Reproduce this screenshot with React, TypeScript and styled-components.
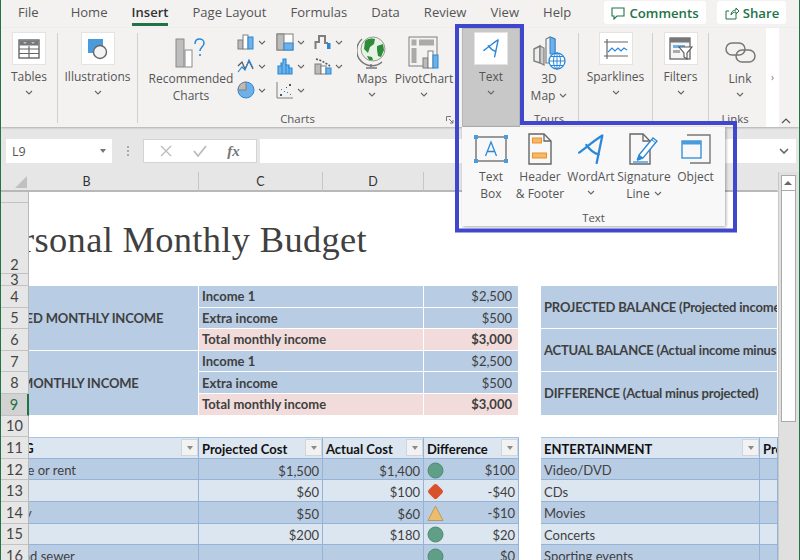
import React from 'react'
import styled, { createGlobalStyle } from 'styled-components'

const GlobalStyle = createGlobalStyle`
  html, body {
    margin: 0;
    padding: 0;
    background: #fff;
  }
  * {
    box-sizing: border-box;
  }
`

const UI_FONT = `"Open Sans", "Noto Sans", sans-serif`
const SHEET_FONT = `Lato, "Liberation Sans", sans-serif`

const Window = styled.div`
  position: relative;
  width: 800px;
  height: 560px;
  overflow: hidden;
  display: flex;
  flex-direction: column;
  background: #f3f2f1;
  border-left: 1px solid #217346;
  border-right: 1px solid #217346;
  font-family: ${UI_FONT};
  color: #444;
`

/* ---------- menu bar ---------- */

const MenuBar = styled.div`
  height: 28px;
  display: flex;
  align-items: flex-start;
  padding-left: 5px;
  flex: none;
`

const Tab = styled.div<{ $active?: boolean; $gap?: number }>`
  position: relative;
  height: 28px;
  padding: 3px 12px 0;
  margin-right: ${({ $gap }) => $gap || 0}px;
  font-size: 13.05px;
  line-height: 18px;
  font-weight: ${({ $active }) => ($active ? 600 : 400)};
  color: ${({ $active }) => ($active ? '#333' : '#555')};

  &::after {
    content: '';
    display: ${({ $active }) => ($active ? 'block' : 'none')};
    position: absolute;
    left: 12px;
    right: 12px;
    top: 23px;
    height: 3px;
    background: #217346;
  }
`

const MenuActions = styled.div`
  margin-left: auto;
  margin-right: 13px;
  margin-top: 1px;
  display: flex;
  gap: 11px;
`

const ActionButton = styled.div<{ $width: number }>`
  width: ${({ $width }) => $width}px;
  height: 23px;
  display: flex;
  align-items: center;
  justify-content: center;
  gap: 4px;
  background: #fff;
  border-radius: 3px;
  color: #217346;
  font-size: 13.2px;
  font-weight: 600;
`

/* ---------- ribbon ---------- */

const Ribbon = styled.div`
  position: relative;
  height: 99px;
  flex: none;
  display: flex;
  box-shadow: 0 1px 2px rgba(0, 0, 0, 0.25);
  z-index: 1;
`

const Group = styled.div<{ $width: number; $plain?: boolean }>`
  position: relative;
  width: ${({ $width }) => $width}px;
  flex: none;
  display: flex;
  flex-direction: column;

  &::after {
    content: '';
    display: ${({ $plain }) => ($plain ? 'none' : 'block')};
    position: absolute;
    right: 0;
    top: 5px;
    bottom: 4px;
    width: 1px;
    background: #d2d0ce;
  }
`

const GroupRow = styled.div<{ $pad?: number }>`
  flex: 1;
  display: flex;
  padding-left: ${({ $pad }) => $pad || 0}px;
  min-height: 0;
`

const GroupColumn = styled.div`
  display: flex;
  flex-direction: column;
  min-height: 0;
`

const GroupLabel = styled.div`
  height: 15px;
  flex: none;
  line-height: 14px;
  text-align: center;
  font-size: 11.4px;
  color: #555;
`

const BigButton = styled.div<{ $width: number; $active?: boolean; $tile?: boolean; $grow?: boolean }>`
  width: ${({ $width }) => $width}px;
  flex: ${({ $grow }) => ($grow ? '1' : 'none')};
  display: flex;
  flex-direction: column;
  align-items: center;
  padding-top: ${({ $tile }) => ($tile ? 4 : 7)}px;
  background: ${({ $active }) => ($active ? '#c8c8c8' : 'transparent')};
  box-shadow: ${({ $active }) => ($active ? 'inset 0 0 0 1px #b5b5b5' : 'none')};
`

const Tile = styled.div`
  width: 34px;
  height: 33px;
  margin-bottom: 3px;
  flex: none;
  background: #fff;
  border: 1px solid #e3e3e3;
  display: flex;
  align-items: center;
  justify-content: center;
`

const IconSlot = styled.div`
  height: 35px;
  flex: none;
  display: flex;
  align-items: center;
  justify-content: center;
`

const Label = styled.div`
  font-size: 12px;
  line-height: 17px;
  text-align: center;
  white-space: nowrap;
  color: #555;
`

const ChevronRow = styled.div`
  height: 15px;
  display: flex;
  align-items: center;
  justify-content: center;
`

const SmallCharts = styled.div`
  display: grid;
  grid-auto-flow: column;
  grid-template-rows: repeat(3, 24px);
  grid-template-columns: 38.5px 38.5px 34px;
  padding-top: 2px;
`

const SmallChart = styled.div`
  display: flex;
  align-items: center;
  gap: 3px;
`

const ScrollTab = styled.div`
  width: 13px;
  margin-left: 5px;
  background: #fff;
  display: flex;
  align-items: center;
  justify-content: center;
  color: #777;
  font-size: 10px;
  padding-bottom: 2px;
`

const Launcher = styled.svg`
  position: absolute;
  right: 3px;
  bottom: 3px;
`

const Collapse = styled.svg`
  position: absolute;
  right: 8px;
  bottom: 3px;
`

/* ---------- formula bar ---------- */

const FormulaBar = styled.div`
  height: 45px;
  flex: none;
  background: #e6e6e6;
  display: flex;
  padding: 12px 3px 9px 5px;
`

const NameBox = styled.div`
  width: 106px;
  background: #fff;
  display: flex;
  align-items: center;
  justify-content: space-between;
  padding: 0 6px;
  font-size: 12.5px;
  color: #555;
`

const DownTriangle = styled.span<{ $color?: string }>`
  width: 0;
  height: 0;
  border-left: 3.5px solid transparent;
  border-right: 3.5px solid transparent;
  border-top: 4px solid ${({ $color }) => $color || '#777'};
`

const Dots = styled.div`
  width: 31px;
  display: flex;
  flex-direction: column;
  align-items: center;
  justify-content: center;
  gap: 2px;

  span {
    width: 2px;
    height: 2px;
    background: #aaa;
  }
`

const FxGroup = styled.div`
  width: 114px;
  background: #fff;
  border: 1px solid #d4d4d4;
  display: flex;
  align-items: center;
  justify-content: space-around;
  padding: 0 6px;
  margin-right: 3px;
`

const FxLabel = styled.span`
  font-family: "Liberation Serif", serif;
  font-style: italic;
  font-weight: 700;
  font-size: 15px;
  color: #777;
`

const FormulaInput = styled.div`
  flex: 1;
  background: #fff;
  display: flex;
  align-items: center;
  justify-content: flex-end;
  padding-right: 7px;
`

/* ---------- sheet ---------- */

const SheetArea = styled.div`
  flex: 1;
  display: flex;
  min-height: 0;
  background: #fff;
`

const SheetGrid = styled.div`
  width: 777px;
  flex: none;
  display: grid;
  grid-template-columns: 28px 170px 124px 101px 95px 22px 219px 18px;
  grid-template-rows: 20px 11px 71px 12px repeat(13, 21.6px);
  overflow: hidden;
  font-family: ${SHEET_FONT};
  font-size: 13px;
  color: #404040;
`

const ColHead = styled.div<{ $col: number; $span?: number; $offset?: number; $open?: boolean }>`
  grid-column: ${({ $col, $span }) => `${$col} / span ${$span || 1}`};
  grid-row: 1;
  background: #e6e6e6;
  border-bottom: 2px solid #b8b8b8;
  border-right: 1px solid ${({ $open }) => ($open ? 'transparent' : '#c6c6c6')};
  display: flex;
  align-items: center;
  justify-content: center;
  padding-right: ${({ $offset }) => $offset || 0}px;
  font-size: 12.5px;
  color: #333;
`

const Corner = styled.div`
  grid-column: 1;
  grid-row: 1;
  background: #e6e6e6;
  border-bottom: 2px solid #b8b8b8;
  display: flex;
  align-items: flex-end;
  justify-content: flex-end;
  padding: 0 2px 2px 0;

  span {
    width: 0;
    height: 0;
    border-left: 12px solid transparent;
    border-bottom: 12px solid #c0c0c0;
  }
`

const RowHead = styled.div<{ $row: number; $active?: boolean; $bottom?: boolean }>`
  grid-column: 1;
  grid-row: ${({ $row }) => $row};
  background: ${({ $active }) => ($active ? '#d2d2d2' : '#e6e6e6')};
  border-bottom: 1px solid #c2c2c2;
  border-right: ${({ $active }) => ($active ? '2px solid #217346' : '1px solid #b8b8b8')};
  display: flex;
  align-items: ${({ $bottom }) => ($bottom ? 'flex-end' : 'center')};
  justify-content: center;
  overflow: hidden;
  font-size: 14.5px;
  line-height: 17px;
  color: ${({ $active }) => ($active ? '#217346' : '#444')};
`

type Tone = 'blue' | 'light' | 'pink' | 'white'

const toneColor: Record<Tone, string> = {
  blue: '#b8cce4',
  light: '#dce6f1',
  pink: '#f2dcdb',
  white: '#fff',
}

const Cell = styled.div<{
  $col: number
  $row: number
  $colSpan?: number
  $rowSpan?: number
  $tone?: Tone
  $bold?: boolean
  $right?: boolean
  $tight?: number
}>`
  grid-column: ${({ $col, $colSpan }) => `${$col} / span ${$colSpan || 1}`};
  grid-row: ${({ $row, $rowSpan }) => `${$row} / span ${$rowSpan || 1}`};
  background: ${({ $tone }) => toneColor[$tone || 'white']};
  font-weight: ${({ $bold }) => ($bold ? 700 : 400)};
  letter-spacing: ${({ $tight }) => ($tight ? -$tight : 0)}px;
  display: flex;
  align-items: center;
  justify-content: ${({ $right }) => ($right ? 'flex-end' : 'flex-start')};
  padding: ${({ $right }) => ($right ? '0 6px 0 0' : '0 0 0 3px')};
  white-space: nowrap;
  overflow: hidden;
  border-right: 1px solid #fff;
  border-bottom: 1.5px solid #fff;
`

const ClippedText = styled.span<{ $shift: number }>`
  margin-left: ${({ $shift }) => -$shift}px;
  flex: none;
`

const TitleCell = styled.div`
  grid-column: 2 / span 3;
  grid-row: 3;
  overflow: hidden;
  white-space: nowrap;
  display: flex;
  align-items: flex-end;
  padding-bottom: 14px;
  font-family: "Liberation Serif", serif;
  font-size: 36.4px;
  line-height: 40px;
  letter-spacing: 0.35px;
  color: #404040;
`

const TableCell = styled.div<{
  $col: number
  $row: number
  $shade: 'blue' | 'light'
  $head?: boolean
  $right?: boolean
}>`
  grid-column: ${({ $col }) => $col};
  grid-row: ${({ $row }) => $row};
  background: ${({ $shade }) => toneColor[$shade]};
  border-right: 1px solid #95b3d7;
  border-bottom: 1px solid #95b3d7;
  border-top: ${({ $head }) => ($head ? '1px solid #a9c2e0' : '0')};
  color: ${({ $head }) => ($head ? '#111' : '#404040')};
  font-weight: ${({ $head }) => ($head ? 700 : 400)};
  display: flex;
  align-items: center;
  justify-content: ${({ $right }) => ($right ? 'flex-end' : 'space-between')};
  gap: 2px;
  padding: ${({ $head, $right }) => ($head ? '0 0 0 3px' : $right ? '3px 3px 0 0' : '2px 3px 0 3px')};
  white-space: nowrap;
  overflow: hidden;
`

const HeadText = styled.span`
  padding-top: 2px;
`

const FilterButton = styled.div`
  width: 17px;
  height: 17px;
  flex: none;
  background: #f2f2f2;
  border: 1px solid #cfd6df;
  display: flex;
  align-items: center;
  justify-content: center;
`

const Scrollbar = styled.div`
  flex: 1;
  background: #e0e0e0;
  border-left: 1px solid #c8c8c8;
  display: flex;
  flex-direction: column;
  align-items: center;
  padding: 3px 2px 0 0;
`

const ScrollArrow = styled.div`
  width: 15px;
  height: 16px;
  background: #fff;
  border: 1px solid #aaa;
  display: flex;
  align-items: center;
  justify-content: center;

  span {
    width: 0;
    height: 0;
    border-left: 4px solid transparent;
    border-right: 4px solid transparent;
    border-bottom: 4px solid #666;
  }
`

const ScrollThumb = styled.div`
  width: 15px;
  height: 231px;
  background: #fff;
  border: 1px solid #aaa;
  border-top: 0;
`

/* ---------- dropdown and annotation ---------- */

const Dropdown = styled.div`
  position: absolute;
  left: 461px;
  top: 127px;
  width: 263px;
  height: 99px;
  z-index: 2;
  background: #f8f8f8;
  box-shadow: 1px 1px 3px rgba(0, 0, 0, 0.35);
  display: flex;
  flex-direction: column;
`

const DropRow = styled.div`
  flex: 1;
  display: flex;
  padding-left: 5px;
`

const DropButton = styled.div<{ $width: number }>`
  width: ${({ $width }) => $width}px;
  flex: none;
  display: flex;
  flex-direction: column;
  align-items: center;
  padding-top: 5px;
`

const DropIcon = styled.div`
  height: 34px;
  margin-bottom: 2px;
  display: flex;
  align-items: center;
  justify-content: center;
`

const InlineChevron = styled.span`
  display: inline-flex;
  margin-left: 4px;
  vertical-align: 2px;
`

const Annotation = styled.svg`
  position: absolute;
  left: -1px;
  top: 0;
  z-index: 3;
  pointer-events: none;
`

const StatusSvg = styled.svg`
  flex: none;
`

/* ---------- drawings ---------- */

const Chevron = () => (
  <svg width="8" height="5" viewBox="0 0 8 5">
    <path d="M1 1l3 3 3-3" fill="none" stroke="#666" strokeWidth="1.1" />
  </svg>
)

const Grey = '#7f7f7f'
const Blue = '#2b88d8'
const LightBlue = '#9ccbee'

const TableIcon = () => (
  <svg width="22" height="22" viewBox="0 0 22 22">
    <rect x="1" y="2" width="20" height="18" fill="#fff" stroke="#666" strokeWidth="1.4" />
    <rect x="1.5" y="2.5" width="19" height="5" fill="#777" />
    <path d="M5 4l2 2 2-2zM13 4l2 2 2-2z" fill={LightBlue} />
    <path d="M1 11h20M1 15.5h20M11 8v12" stroke="#666" strokeWidth="1.2" />
  </svg>
)

const ShapesIcon = () => (
  <svg width="24" height="24" viewBox="0 0 24 24">
    <rect x="2" y="2" width="15" height="14" fill="#4a9bdc" />
    <circle cx="14" cy="15" r="6.5" fill="#f4f4f4" stroke="#666" strokeWidth="1.4" />
  </svg>
)

const RecommendedIcon = () => (
  <svg width="32" height="32" viewBox="0 0 32 32">
    <rect x="1" y="2" width="8" height="28" fill="#bdbdbd" stroke="#8a8a8a" />
    <rect x="10" y="13" width="7" height="17" fill="#fff" stroke="#8a8a8a" />
    <path d="M20 7c0-7 9-6 9-1 0 4-4 4-4 8" fill="none" stroke={Blue} strokeWidth="1.5" />
    <circle cx="25" cy="18" r="1.1" fill={Blue} />
  </svg>
)

const ColumnMini = () => (
  <svg width="18" height="18" viewBox="0 0 18 18">
    <rect x="1" y="7" width="5" height="9" fill="#bbb" stroke={Grey} />
    <rect x="6" y="2" width="5" height="14" fill="#fff" stroke={Grey} />
    <rect x="11" y="4" width="5" height="12" fill="#6fb1e6" stroke={Blue} />
  </svg>
)

const LineMini = () => (
  <svg width="18" height="18" viewBox="0 0 18 18">
    <path d="M1 9l4-4 3 7 4-8 4 8" fill="none" stroke="#555" strokeWidth="1.2" />
    <path d="M1 15l4-5 3 3 4-10 4 8" fill="none" stroke={Blue} strokeWidth="1.2" />
  </svg>
)

const PieMini = () => (
  <svg width="18" height="18" viewBox="0 0 18 18">
    <circle cx="9" cy="9" r="8" fill="#6fb1e6" stroke={Blue} />
    <path d="M9 9V1a8 8 0 0 0-8 8z" fill="#bbb" stroke={Grey} />
  </svg>
)

const HierarchyMini = () => (
  <svg width="18" height="18" viewBox="0 0 18 18">
    <rect x="1" y="1" width="16" height="16" fill="#fff" stroke={Grey} />
    <rect x="1" y="1" width="7" height="16" fill="#bbb" stroke={Grey} />
    <rect x="8" y="10" width="9" height="7" fill="#6fb1e6" stroke={Blue} />
  </svg>
)

const StatMini = () => (
  <svg width="18" height="18" viewBox="0 0 18 18">
    <path
      d="M2 17V9h3V6h2V2h3v6h3v3h3v6z"
      fill="#6fb1e6"
      stroke={Blue}
      strokeWidth="1.1"
    />
    <path d="M6 17V7M10 17V7M13 17v-8" stroke={Blue} />
  </svg>
)

const ScatterMini = () => (
  <svg width="18" height="18" viewBox="0 0 18 18">
    <path d="M1 1v16h16" fill="none" stroke={Grey} />
    <path d="M5 8h1v1H5zM8 10h1v1H8zM11 11h1v1h-1zM14 13h1v1h-1z" fill={Blue} />
    <path d="M4 13h2v2H4zM13 3h2v2h-2zM10 6h1v1h-1z" fill="#555" />
  </svg>
)

const WaterfallMini = () => (
  <svg width="18" height="18" viewBox="0 0 18 18">
    <path d="M1.5 16V9H5V3h6v7h3" fill="none" stroke={Grey} strokeWidth="2" />
    <rect x="13" y="10" width="3.5" height="6" fill={Blue} />
  </svg>
)

const BoxMini = () => (
  <svg width="18" height="18" viewBox="0 0 18 18">
    <path d="M2 2l6 2 5 3 3 2" fill="none" stroke="#555" strokeWidth="1.6" strokeDasharray="2 1.5" />
    <rect x="1" y="7" width="6" height="10" fill="#bbb" stroke={Grey} />
    <rect x="7" y="9" width="5" height="8" fill="#fff" stroke={Grey} />
    <rect x="12" y="11" width="5" height="6" fill="#6fb1e6" stroke={Blue} />
  </svg>
)

const GlobeIcon = () => (
  <svg width="30" height="35" viewBox="0 0 30 35">
    <circle cx="16" cy="14" r="12" fill="#e8f2e4" stroke="#999" />
    <path d="M8 6c3-3 8-3 10-2l-1 5-4 3-2 6-4-4zM20 11l6-2 1 6-3 7-3-1-1-6zM10 21l5 1 1 3-4 0z" fill="#2e8b3a" />
    <path d="M5 4A15 15 0 0 0 25 27" fill="none" stroke="#777" strokeWidth="1.5" />
    <path d="M14 29v3M9 33h11" stroke="#777" strokeWidth="1.6" />
  </svg>
)

const PivotIcon = () => (
  <svg width="32" height="33" viewBox="0 0 32 33">
    <rect x="1" y="1" width="28" height="29" fill="#f3f2f1" stroke={Grey} />
    <rect x="3.5" y="3.5" width="5" height="6" fill="#aaa" />
    <rect x="11" y="3.5" width="15" height="6" fill="#aaa" />
    <rect x="3.5" y="12" width="5" height="15" fill="#aaa" />
    <rect x="15" y="22" width="5" height="10" fill="#bbb" stroke={Grey} />
    <rect x="20" y="15" width="5" height="17" fill="#fff" stroke={Grey} />
    <rect x="25" y="19" width="5" height="13" fill="#6fb1e6" stroke={Blue} />
  </svg>
)

const WordArtIcon = ({ width, height }: { width: number; height: number }) => (
  <svg width={width} height={height} viewBox="0 0 26 30">
    <path
      d="M1 18C8 13 16 6 23.5 1.5L18 28M8 10.5C11 15 14 18 20 20"
      fill="none"
      stroke={Blue}
      strokeWidth="2.2"
      strokeLinecap="round"
      strokeLinejoin="round"
    />
  </svg>
)

const MapIcon = () => (
  <svg width="34" height="34" viewBox="0 0 34 34">
    <path d="M2 13l6-3v17l-6-2z" fill="#eee" stroke={Grey} strokeWidth="1.4" />
    <path d="M8 10l4 2v17l-4-2z" fill="#ccc" stroke={Grey} strokeWidth="1.2" />
    <path d="M14 3l4-2 5 2v24l-9 0z" fill="#f3f2f1" stroke={Grey} strokeWidth="1.2" />
    <path d="M18 1l5 2v15h-5z" fill="#6fb1e6" stroke={Blue} />
    <circle cx="25" cy="25" r="8" fill="#fff" stroke={Blue} strokeWidth="1.3" />
    <path d="M17 25h16M25 17v16M19 20.5h12M19 29.5h12" stroke={Blue} />
    <ellipse cx="25" cy="25" rx="3.5" ry="8" fill="none" stroke={Blue} />
  </svg>
)

const SparkIcon = () => (
  <svg width="24" height="20" viewBox="0 0 24 20">
    <path d="M3 0v20M0 3h24M0 17h24" stroke="#666" strokeWidth="1.2" />
    <path d="M4 13l4-4 3 3 3-3 3 3 3-3 3 2" fill="none" stroke={Blue} strokeWidth="1.2" />
  </svg>
)

const FilterIcon = () => (
  <svg width="24" height="24" viewBox="0 0 24 24">
    <rect x="1" y="1" width="20" height="21" fill="#f5f5f5" stroke="#666" strokeWidth="1.3" />
    <rect x="1" y="1" width="20" height="4.5" fill="#777" />
    <rect x="4" y="8" width="12" height="3" fill="#6fb1e6" />
    <rect x="4" y="13" width="7" height="3" fill="#aaa" />
    <path d="M10 10h13l-5 6v6l-3-2v-4z" fill="#fff" stroke="#555" strokeWidth="1.1" />
  </svg>
)

const LinkIcon = () => (
  <svg width="31" height="22" viewBox="0 0 31 22">
    <rect x="1" y="1" width="19" height="12" rx="6" fill="none" stroke="#777" strokeWidth="1.5" />
    <rect x="11" y="8" width="19" height="12" rx="6" fill="none" stroke="#777" strokeWidth="1.5" />
  </svg>
)

const TextBoxIcon = () => (
  <svg width="34" height="30" viewBox="0 0 34 30">
    <rect x="2" y="3" width="30" height="24" fill="#f8f8f8" stroke="#666" strokeWidth="1.3" />
    <path d="M11.5 22L17 8l5.5 14M13.5 17.5h7" fill="none" stroke={Blue} strokeWidth="1.3" />
    <path d="M0 1h4v4H0zM30 1h4v4h-4zM0 25h4v4H0zM30 25h4v4h-4z" fill="#4a9bdc" />
  </svg>
)

const HeaderFooterIcon = () => (
  <svg width="24" height="32" viewBox="0 0 24 32">
    <path d="M1 1h15l7 7v23H1z" fill="#f8f8f8" stroke="#666" strokeWidth="1.4" />
    <path d="M16 1v7h7" fill="none" stroke="#666" strokeWidth="1.3" />
    <rect x="4.5" y="5" width="9" height="5" fill="#f5b866" stroke="#e8912c" />
    <rect x="4.5" y="20" width="14" height="5" fill="#f5b866" stroke="#e8912c" />
  </svg>
)

const SignatureIcon = () => (
  <svg width="30" height="32" viewBox="0 0 30 32">
    <path d="M1 1h13l7 7v23H1z" fill="#f8f8f8" stroke="#666" strokeWidth="1.4" />
    <path d="M14 1v7h7" fill="none" stroke="#666" strokeWidth="1.3" />
    <path d="M10 22L24 5l4 3-14 17-5 2z" fill="#fff" stroke={Blue} strokeWidth="1.3" />
    <path d="M8 27l2-5 4 3zM23 7l4 3" fill={Blue} stroke={Blue} />
    <path d="M4 29h15" stroke={Blue} strokeWidth="1.2" />
  </svg>
)

const ObjectIcon = () => (
  <svg width="30" height="30" viewBox="0 0 30 30">
    <path d="M6 1h23v28H9" fill="#f8f8f8" stroke="#777" strokeWidth="1.4" />
    <rect x="1" y="7" width="19" height="17" fill="#f8f8f8" stroke={Blue} strokeWidth="1.3" />
    <rect x="1" y="7" width="19" height="3.5" fill="#4a9bdc" />
  </svg>
)

const StatusCircle = () => (
  <StatusSvg width="17" height="17" viewBox="0 0 17 17">
    <circle cx="8.5" cy="8.5" r="7.5" fill="#5f9e87" stroke="#4f8a74" />
  </StatusSvg>
)

const StatusDiamond = () => (
  <StatusSvg width="17" height="17" viewBox="0 0 17 17">
    <rect x="2.5" y="2.5" width="12" height="12" rx="2.5" transform="rotate(45 8.5 8.5)" fill="#d9512c" />
  </StatusSvg>
)

const StatusTriangle = () => (
  <StatusSvg width="17" height="17" viewBox="0 0 17 17">
    <path d="M8.5 1L16 15.5H1z" fill="#eebc6f" stroke="#b79a63" strokeLinejoin="round" />
  </StatusSvg>
)

/* ---------- data ---------- */

const tabs = ['Home', 'Insert', 'Page Layout', 'Formulas', 'Data', 'Review', 'View', 'Help']

const incomeRows = [
  { label: 'Income 1', value: '$2,500', tone: 'blue' as Tone, bold: false },
  { label: 'Extra income', value: '$500', tone: 'blue' as Tone, bold: false },
  { label: 'Total monthly income', value: '$3,000', tone: 'pink' as Tone, bold: true },
]

const balances = [
  'PROJECTED BALANCE (Projected income minus expenses)',
  'ACTUAL BALANCE (Actual income minus expenses)',
  'DIFFERENCE (Actual minus projected)',
]

const housing = [
  { name: 'Mortgage or rent', shift: 53, projected: '$1,500', actual: '$1,400', diff: '$100', icon: <StatusCircle /> },
  { name: '', shift: 0, projected: '$60', actual: '$100', diff: '-$40', icon: <StatusDiamond /> },
  { name: 'Electricity', shift: 57, projected: '$50', actual: '$60', diff: '-$10', icon: <StatusTriangle /> },
  { name: '', shift: 0, projected: '$200', actual: '$180', diff: '$20', icon: <StatusCircle /> },
  { name: 'Water and sewer', shift: 54, projected: '', actual: '', diff: '$0', icon: <StatusCircle /> },
]

const entertainment = ['Video/DVD', 'CDs', 'Movies', 'Concerts', 'Sporting events']

const FIRST_DATA_ROW = 5 // grid line of sheet row 4

const gridRow = (sheetRow: number) => FIRST_DATA_ROW + sheetRow - 4

const FilterCell = () => (
  <FilterButton>
    <DownTriangle $color="#8a8a8a" />
  </FilterButton>
)

const Sheet = () => (
  <SheetGrid>
    <Corner>
      <span />
    </Corner>
    <ColHead $col={2} $offset={54}>
      B
    </ColHead>
    <ColHead $col={3}>C</ColHead>
    <ColHead $col={4}>D</ColHead>
    <ColHead $col={5}>E</ColHead>
    <ColHead $col={6}>F</ColHead>
    <ColHead $col={7} $span={2} $open>
      G
    </ColHead>

    <RowHead $row={2} />
    <RowHead $row={3} $bottom>
      2
    </RowHead>
    <RowHead $row={4}>3</RowHead>
    {[4, 5, 6, 7, 8, 9, 10, 11, 12, 13, 14, 15, 16].map((n) => (
      <RowHead key={n} $row={gridRow(n)} $active={n === 9}>
        {n}
      </RowHead>
    ))}

    <TitleCell>
      <ClippedText $shift={44}>Personal Monthly Budget</ClippedText>
    </TitleCell>

    <Cell $col={2} $row={gridRow(4)} $rowSpan={3} $tone="blue" $bold $tight={0.15}>
      <ClippedText $shift={61}>PROJECTED MONTHLY INCOME</ClippedText>
    </Cell>
    <Cell $col={2} $row={gridRow(7)} $rowSpan={3} $tone="blue" $bold $tight={0.15}>
      <ClippedText $shift={63}>ACTUAL MONTHLY INCOME</ClippedText>
    </Cell>

    {[4, 7].flatMap((start) =>
      incomeRows.map((r, i) => [
        <Cell key={`l${start}${i}`} $col={3} $colSpan={2} $row={gridRow(start + i)} $tone={r.tone} $bold>
          {r.label}
        </Cell>,
        <Cell key={`v${start}${i}`} $col={5} $row={gridRow(start + i)} $tone={r.tone} $bold={r.bold} $right>
          {r.value}
        </Cell>,
      ]),
    )}

    {balances.map((text, i) => (
      <Cell key={text} $col={7} $colSpan={2} $row={gridRow(4 + i * 2)} $rowSpan={2} $tone="blue" $bold $tight={0.2}>
        {text}
      </Cell>
    ))}

    <TableCell $col={2} $row={gridRow(11)} $shade="light" $head>
      <ClippedText $shift={59}>
        <HeadText>HOUSING</HeadText>
      </ClippedText>
      <FilterCell />
    </TableCell>
    <TableCell $col={3} $row={gridRow(11)} $shade="light" $head>
      <HeadText>Projected Cost</HeadText>
      <FilterCell />
    </TableCell>
    <TableCell $col={4} $row={gridRow(11)} $shade="light" $head>
      <HeadText>Actual Cost</HeadText>
      <FilterCell />
    </TableCell>
    <TableCell $col={5} $row={gridRow(11)} $shade="light" $head>
      <HeadText>Difference</HeadText>
      <FilterCell />
    </TableCell>
    <TableCell $col={7} $row={gridRow(11)} $shade="light" $head>
      <HeadText>ENTERTAINMENT</HeadText>
      <FilterCell />
    </TableCell>
    <TableCell $col={8} $row={gridRow(11)} $shade="light" $head>
      <HeadText>Projected Cost</HeadText>
    </TableCell>

    {housing.map((r, i) => {
      const row = gridRow(12 + i)
      const shade = i % 2 === 0 ? 'blue' : 'light'
      return (
        <React.Fragment key={i}>
          <TableCell $col={2} $row={row} $shade={shade}>
            <ClippedText $shift={r.shift}>{r.name}</ClippedText>
          </TableCell>
          <TableCell $col={3} $row={row} $shade={shade} $right>
            {r.projected}
          </TableCell>
          <TableCell $col={4} $row={row} $shade={shade} $right>
            {r.actual}
          </TableCell>
          <TableCell $col={5} $row={row} $shade={shade}>
            {r.icon}
            {r.diff}
          </TableCell>
          <TableCell $col={7} $row={row} $shade={shade}>
            {entertainment[i]}
          </TableCell>
          <TableCell $col={8} $row={row} $shade={shade} />
        </React.Fragment>
      )
    })}
  </SheetGrid>
)

export default function App() {
  return (
    <Window>
      <GlobalStyle />
      <MenuBar>
        <Tab $gap={8}>File</Tab>
        {tabs.map((t) => (
          <Tab key={t} $active={t === 'Insert'}>
            {t}
          </Tab>
        ))}
        <MenuActions>
          <ActionButton $width={102}>
            <svg width="14" height="14" viewBox="0 0 14 14">
              <path d="M1 2h12v8H6l-3 3v-3H1z" fill="none" stroke="#217346" strokeWidth="1.1" />
            </svg>
            Comments
          </ActionButton>
          <ActionButton $width={69}>
            <svg width="15" height="14" viewBox="0 0 15 14">
              <path d="M2 5h3M2 5v8h10V8M7 9c0-3 2-5 5-5V2l3 3-3 3V6c-2 0-4 1-5 3z" fill="none" stroke="#217346" strokeWidth="1" />
            </svg>
            Share
          </ActionButton>
        </MenuActions>
      </MenuBar>

      <Ribbon>
        <Group $width={57}>
          <GroupRow>
            <BigButton $width={56} $tile>
              <Tile>
                <TableIcon />
              </Tile>
              <Label>Tables</Label>
              <ChevronRow>
                <Chevron />
              </ChevronRow>
            </BigButton>
          </GroupRow>
        </Group>
        <Group $width={80}>
          <GroupRow>
            <BigButton $width={79} $tile>
              <Tile>
                <ShapesIcon />
              </Tile>
              <Label>Illustrations</Label>
              <ChevronRow>
                <Chevron />
              </ChevronRow>
            </BigButton>
          </GroupRow>
        </Group>
        <Group $width={319}>
          <GroupRow $pad={7}>
            <BigButton $width={92}>
              <IconSlot>
                <RecommendedIcon />
              </IconSlot>
              <Label>
                Recommended
                <br />
                Charts
              </Label>
            </BigButton>
            <SmallCharts>
              <SmallChart>
                <ColumnMini />
                <Chevron />
              </SmallChart>
              <SmallChart>
                <LineMini />
                <Chevron />
              </SmallChart>
              <SmallChart>
                <PieMini />
                <Chevron />
              </SmallChart>
              <SmallChart>
                <HierarchyMini />
                <Chevron />
              </SmallChart>
              <SmallChart>
                <StatMini />
                <Chevron />
              </SmallChart>
              <SmallChart>
                <ScatterMini />
                <Chevron />
              </SmallChart>
              <SmallChart>
                <WaterfallMini />
                <Chevron />
              </SmallChart>
              <SmallChart>
                <BoxMini />
                <Chevron />
              </SmallChart>
            </SmallCharts>
            <BigButton $width={48}>
              <IconSlot>
                <GlobeIcon />
              </IconSlot>
              <Label>Maps</Label>
              <ChevronRow>
                <Chevron />
              </ChevronRow>
            </BigButton>
            <BigButton $width={56}>
              <IconSlot>
                <PivotIcon />
              </IconSlot>
              <Label>PivotChart</Label>
              <ChevronRow>
                <Chevron />
              </ChevronRow>
            </BigButton>
          </GroupRow>
          <GroupLabel>Charts</GroupLabel>
          <Launcher width="8" height="8" viewBox="0 0 8 8">
            <path d="M.5 5V.5H5M3 3l4 4M7 4v3H4" fill="none" stroke="#777" />
          </Launcher>
        </Group>
        <Group $width={122}>
          <GroupRow $pad={5}>
            <BigButton $width={58} $active $tile>
              <Tile>
                <WordArtIcon width={17} height={19} />
              </Tile>
              <Label>Text</Label>
              <ChevronRow>
                <Chevron />
              </ChevronRow>
            </BigButton>
            <GroupColumn>
              <BigButton $width={58} $grow>
                <IconSlot>
                  <MapIcon />
                </IconSlot>
                <Label>
                  3D
                  <br />
                  Map
                  <InlineChevron>
                    <Chevron />
                  </InlineChevron>
                </Label>
              </BigButton>
              <GroupLabel>Tours</GroupLabel>
            </GroupColumn>
          </GroupRow>
        </Group>
        <Group $width={74}>
          <GroupRow>
            <BigButton $width={73} $tile>
              <Tile>
                <SparkIcon />
              </Tile>
              <Label>Sparklines</Label>
              <ChevronRow>
                <Chevron />
              </ChevronRow>
            </BigButton>
          </GroupRow>
        </Group>
        <Group $width={56}>
          <GroupRow>
            <BigButton $width={55} $tile>
              <Tile>
                <FilterIcon />
              </Tile>
              <Label>Filters</Label>
              <ChevronRow>
                <Chevron />
              </ChevronRow>
            </BigButton>
          </GroupRow>
        </Group>
        <Group $width={52} $plain>
          <GroupRow>
            <BigButton $width={62}>
              <IconSlot>
                <LinkIcon />
              </IconSlot>
              <Label>Link</Label>
              <ChevronRow>
                <Chevron />
              </ChevronRow>
            </BigButton>
          </GroupRow>
          <GroupLabel>Links</GroupLabel>
        </Group>
        <ScrollTab>›</ScrollTab>
        <Collapse width="10" height="6" viewBox="0 0 10 6">
          <path d="M1 5l4-4 4 4" fill="none" stroke="#555" strokeWidth="1.2" />
        </Collapse>
      </Ribbon>

      <FormulaBar>
        <NameBox>
          L9
          <DownTriangle />
        </NameBox>
        <Dots>
          <span />
          <span />
          <span />
        </Dots>
        <FxGroup>
          <svg width="12" height="12" viewBox="0 0 12 12">
            <path d="M1 1l10 10M11 1L1 11" stroke="#bbb" strokeWidth="1.3" />
          </svg>
          <svg width="14" height="12" viewBox="0 0 14 12">
            <path d="M1 6l4 5 8-10" fill="none" stroke="#bbb" strokeWidth="1.8" />
          </svg>
          <FxLabel>fx</FxLabel>
        </FxGroup>
        <FormulaInput>
          <svg width="10" height="6" viewBox="0 0 10 6">
            <path d="M1 1l4 4 4-4" fill="none" stroke="#666" strokeWidth="1.6" />
          </svg>
        </FormulaInput>
      </FormulaBar>

      <SheetArea>
        <Sheet />
        <Scrollbar>
          <ScrollArrow>
            <span />
          </ScrollArrow>
          <ScrollThumb />
        </Scrollbar>
      </SheetArea>

      <Dropdown>
        <DropRow>
          <DropButton $width={48}>
            <DropIcon>
              <TextBoxIcon />
            </DropIcon>
            <Label>
              Text
              <br />
              Box
            </Label>
          </DropButton>
          <DropButton $width={50}>
            <DropIcon>
              <HeaderFooterIcon />
            </DropIcon>
            <Label>
              Header
              <br />& Footer
            </Label>
          </DropButton>
          <DropButton $width={52}>
            <DropIcon>
              <WordArtIcon width={27} height={31} />
            </DropIcon>
            <Label>WordArt</Label>
            <ChevronRow>
              <Chevron />
            </ChevronRow>
          </DropButton>
          <DropButton $width={54}>
            <DropIcon>
              <SignatureIcon />
            </DropIcon>
            <Label>
              Signature
              <br />
              Line
              <InlineChevron>
                <Chevron />
              </InlineChevron>
            </Label>
          </DropButton>
          <DropButton $width={49}>
            <DropIcon>
              <ObjectIcon />
            </DropIcon>
            <Label>Object</Label>
          </DropButton>
        </DropRow>
        <GroupLabel>Text</GroupLabel>
      </Dropdown>

      <Annotation width="800" height="560" viewBox="0 0 800 560">
        <path d="M457 26H522V123H735V230.5H457Z" fill="none" stroke="#3f48cc" strokeWidth="4" />
      </Annotation>
    </Window>
  )
}
